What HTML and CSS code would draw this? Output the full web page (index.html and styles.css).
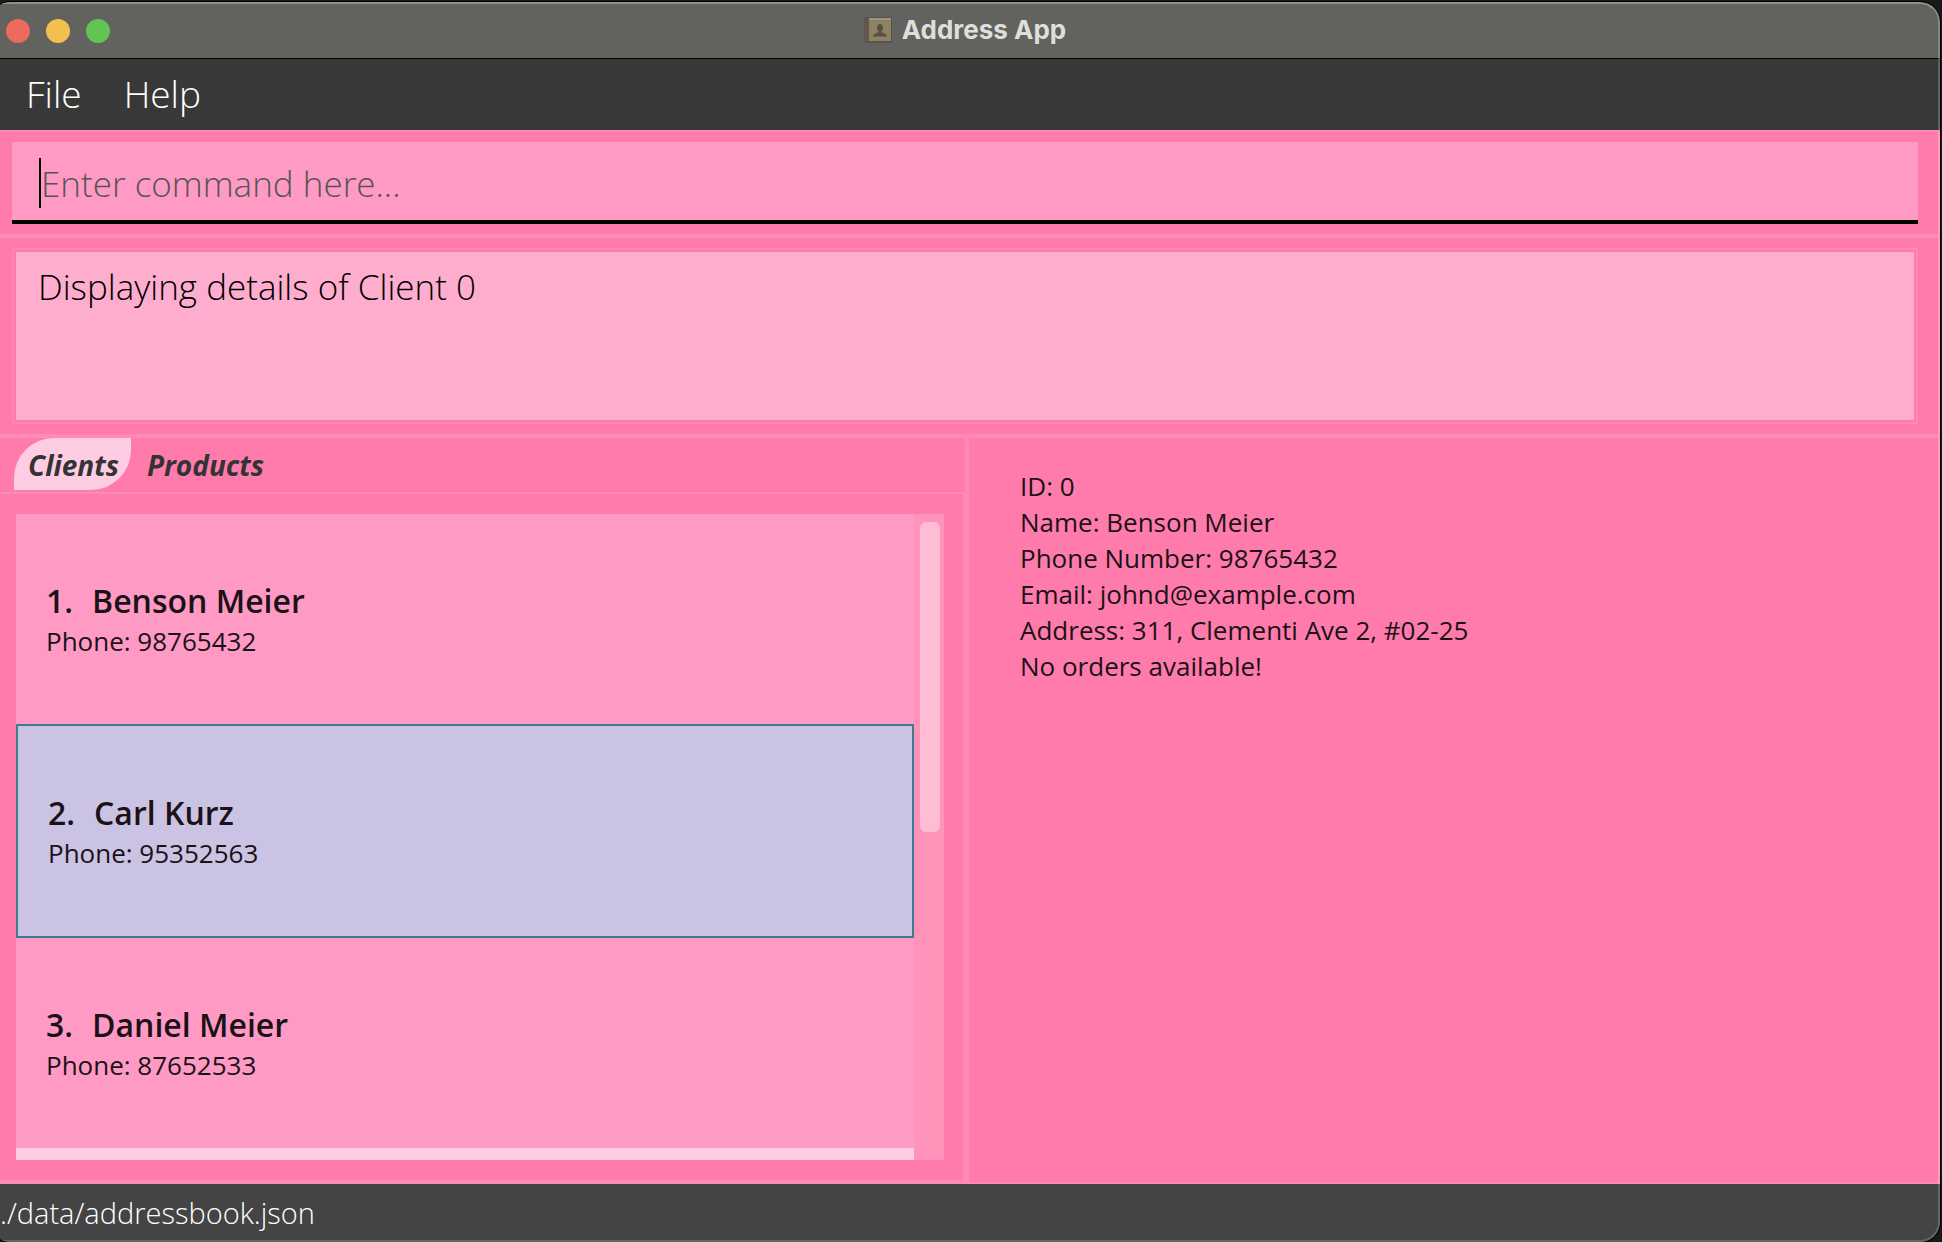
FILE: index.html
```html
<!DOCTYPE html>
<html lang="en">
<head>
<meta charset="utf-8">
<title>Address App</title>
<link rel="stylesheet" href="styles.css">
</head>
<body>
<div class="window">
  <header class="titlebar">
    <div class="lights">
      <button class="light light-close" aria-label="Close"></button>
      <button class="light light-min" aria-label="Minimize"></button>
      <button class="light light-zoom" aria-label="Zoom"></button>
    </div>
    <h1 class="title">
      <svg class="book" viewBox="0 0 28 26" aria-hidden="true">
        <rect x="0" y="0" width="28" height="26" rx="1" fill="#57544f"/>
        <rect x="0" y="1" width="5" height="24" fill="#5f5751"/>
        <rect x="5" y="1" width="22" height="23" fill="#8f8163"/>
        <rect x="5" y="1" width="22" height="2" fill="#9b9486"/>
        <path d="M16 7c2 0 3 1 3 3.500c0 2-1 3-1.500 4c0 1.500 5 1.500 5.500 5H9c.5-3.500 5.500-3.500 5.500-5c-.5-1-1.500-2-1.500-4C13 8 14 7 16 7z" fill="#575144"/>
      </svg>
      <span>Address App</span>
    </h1>
  </header>
  <nav class="menubar">
    <button class="menu">File</button>
    <button class="menu">Help</button>
  </nav>
  <main class="main">
    <section class="command">
      <div class="field">
        <span class="caret"></span>
        <input class="input" type="text" aria-label="Command" placeholder="Enter command here...">
      </div>
    </section>
    <section class="result">
      <textarea class="output" aria-label="Result" readonly>Displaying details of Client 0</textarea>
    </section>
    <div class="split">
      <section class="left">
        <div class="tabs" role="tablist">
          <button class="tab tab-on" role="tab" aria-selected="true">Clients</button>
          <button class="tab" role="tab" aria-selected="false">Products</button>
        </div>
        <div class="pane">
          <ul class="list">
            <li class="card"><h2 class="name"><span>1.</span><span>Benson Meier</span></h2><p class="phone">Phone: 98765432</p></li>
            <li class="card card-on"><h2 class="name"><span>2.</span><span>Carl Kurz</span></h2><p class="phone">Phone: 95352563</p></li>
            <li class="card"><h2 class="name"><span>3.</span><span>Daniel Meier</span></h2><p class="phone">Phone: 87652533</p></li>
            <li class="next"></li>
          </ul>
          <div class="track"><div class="thumb"></div></div>
        </div>
      </section>
      <section class="details">
        <p>ID: 0</p>
        <p>Name: Benson Meier</p>
        <p>Phone Number: 98765432</p>
        <p>Email: johnd@example.com</p>
        <p>Address: 311, Clementi Ave 2, #02-25</p>
        <p>No orders available!</p>
      </section>
    </div>
  </main>
  <footer class="status">./data/addressbook.json</footer>
</div>
</body>
</html>
```
FILE: styles.css
```css
* { box-sizing: border-box; margin: 0; padding: 0; }
body {
  background: #17191b;
  padding: 2px 2px 0 0;
  font-family: "Open Sans", "Noto Sans", sans-serif;
  overflow: hidden;
}
button, input, textarea { border: 0; background: none; font: inherit; color: inherit; }
.window {
  display: flex;
  flex-direction: column;
  height: calc(100vh - 2px);
  background: #444;
  border-radius: 12px 20px 20px 12px / 4px 20px 20px 4px;
  overflow: hidden;
  box-shadow: 0 0 0 1px #000;
}
.titlebar {
  flex: none;
  display: grid;
  grid-template-columns: 1fr auto 1fr;
  align-items: center;
  height: 57px;
  padding: 0 14px 2px 6px;
  background: #62625f;
  border-top: 2px solid #8f8f8b;
  border-right: 2px solid #858582;
  border-bottom: 1px solid #000;
  border-top-right-radius: 20px;
}
.lights { display: flex; gap: 16px; padding-top: 2px; }
.light { width: 24px; height: 24px; border-radius: 50%; }
.light-close { background: #ec6a5e; }
.light-min { background: #f4bf4f; }
.light-zoom { background: #61c554; }
.title {
  display: flex;
  align-items: center;
  gap: 10px;
  font: 700 26px/32px Inter, sans-serif;
  color: #dededd;
}
.book { width: 28px; height: 26px; }
.menubar {
  flex: none;
  display: flex;
  gap: 2px;
  height: 71px;
  padding: 0 6px 2px;
  background: #383838;
  border-right: 2px solid #606060;
}
.menu { padding: 0 20px; font-size: 37px; font-weight: 300; color: #fff; }
.main {
  flex: 1;
  min-height: 0;
  display: flex;
  flex-direction: column;
  background: #ff7bac;
  border-top: 2px solid #ff8ab5;
  border-right: 2px solid #ff99c0;
}
.command { padding: 10px 20px 10px 12px; border-bottom: 4px solid #ff8ab5; }
.field {
  display: flex;
  align-items: center;
  height: 82px;
  padding: 4px 0 0 27px;
  background: #ff9ac4;
  border-bottom: 4px solid #000;
}
.caret { width: 2px; height: 50px; background: #000; }
.input { flex: 1; font-size: 35px; font-weight: 300; outline: 0; }
.input::placeholder { color: #555; opacity: 1; }
.result { padding: 10px 20px 10px 12px; border-bottom: 4px solid #ff8ab5; }
.output {
  display: block;
  width: 100%;
  height: 176px;
  padding: 12px 24px;
  border: 2px solid #ff88b4;
  outline: 2px solid #ff7bac;
  outline-offset: -4px;
  background: #ffadcf;
  font-size: 35px;
  font-weight: 300;
  line-height: 50px;
  color: #000;
  resize: none;
}
.split {
  flex: 1;
  min-height: 0;
  display: grid;
  grid-template-columns: 1fr 1fr;
}
.left {
  display: flex;
  flex-direction: column;
  min-height: 0;
  border-right: 4px solid #ff8ab5;
}
.tabs {
  flex: none;
  display: flex;
  gap: 2px;
  height: 56px;
  padding: 0 14px 2px;
  border-bottom: 2px solid #ff8ab5;
}
.tab {
  height: 52px;
  padding: 2px 12px 0 14px;
  font-size: 28px;
  font-weight: 700;
  font-style: italic;
  color: #333;
}
.tab-on { background: #ffcde3; border-radius: 40px 0; }
.pane {
  flex: 1;
  min-height: 0;
  display: flex;
  padding: 20px 19px 20px 16px;
  border-right: 2px solid #ff8ab5;
  border-bottom: 4px solid #ff8ab5;
}
.list {
  flex: 1;
  display: flex;
  flex-direction: column;
  list-style: none;
  overflow: hidden;
}
.card {
  flex: none;
  display: flex;
  flex-direction: column;
  justify-content: center;
  height: 210px;
  padding: 0 30px;
  background: #ff9ac4;
  color: #1a1216;
}
.card-on { height: 214px; background: #cac3e4; border: 2px solid #3e7b91; }
.name { display: flex; gap: 19px; font-size: 32px; line-height: 44px; font-weight: 600; }
.phone { font-size: 26px; line-height: 36px; }
.next { flex: 1; background: #ffcde3; }
.track { width: 30px; padding: 8px 4px 0 6px; background: #ff93ba; }
.thumb { height: 310px; border-radius: 6px; background: #ffbcd5; }
.details {
  padding: 30px 51px;
  border-bottom: 2px solid #ff8ab5;
  font-size: 26px;
  line-height: 36px;
  color: #1a1216;
}
.status {
  flex: none;
  height: 58px;
  background: #444;
  border: 2px solid #666;
  border-width: 0 2px 2px 0;
  border-radius: 0 0 20px 0;
  font-size: 29px;
  line-height: 58px;
  font-weight: 300;
  color: #fff;
}
```
